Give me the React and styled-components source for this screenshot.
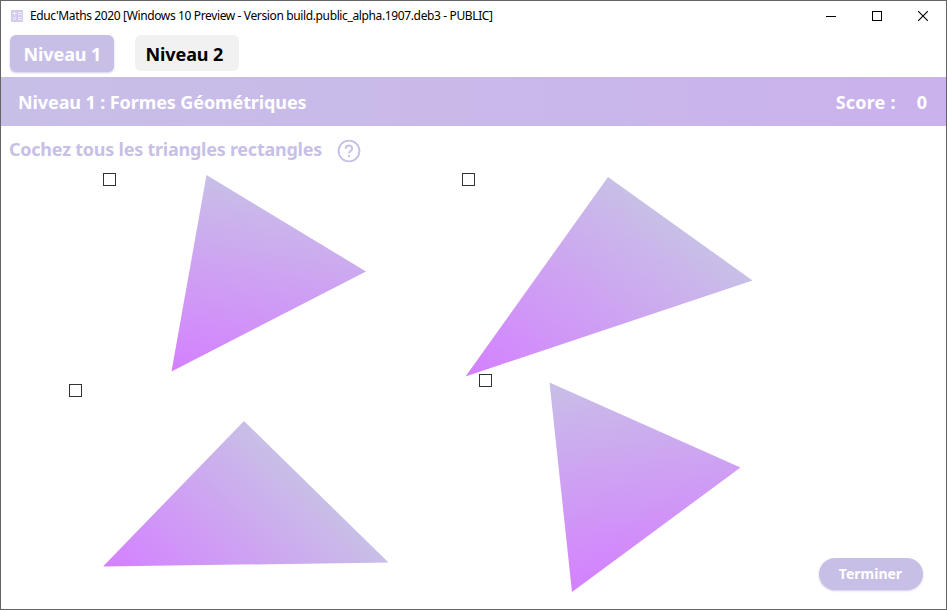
import React from "react";
import styled, { createGlobalStyle } from "styled-components";

const Global = createGlobalStyle`
  * { box-sizing: border-box; }
  body { margin: 0; background: #fff; }
`;
const lilac = "#c8bfe7";

const Window = styled.div`
  width: 947px; height: 610px; display: flex; flex-direction: column;
  border: 1px solid #646464; background: #fff; overflow: hidden;
  font-family: "Noto Sans", "Open Sans", sans-serif;
`;
const TitleBar = styled.header`
  flex: none; height: 30px; display: flex; align-items: center; padding-left: 10px;
`;
const Label = styled.span`
  font-size: ${p => p.$size || 18}px;
  font-weight: ${p => p.$weight || 700};
  letter-spacing: ${p => p.$spacing || 0}px;
  color: ${p => p.$color || "#fff"};
  line-height: 24px; white-space: pre;
`;
const TitleText = styled(Label)`margin-left: 7px;`;
const Controls = styled.div`margin-left: auto; display: flex;`;
const Control = styled.button`
  width: 46px; height: 30px; padding: 0; border: 0; background: none;
  display: grid; place-items: center;
`;
const Tabs = styled.nav`
  flex: none; height: 46px; display: flex; gap: 21px; padding: 4px 0 0 9.4px;
`;
const Tab = styled.button`
  width: 104px; height: ${p => (p.$active ? 37 : 36)}px;
  padding: ${p => (p.$active ? "0" : "1px 6px 0 0")};
  border: 0; border-radius: 6px; font-family: inherit;
  background: ${p => (p.$active ? lilac : "#f1f1f1")};
  box-shadow: ${p => (p.$active ? "0 1px 2px rgba(200,191,231,.8)" : "none")};
`;
const Banner = styled.section`
  flex: none; height: 49px; display: flex; align-items: center;
  padding: 0 19px 0 17px;
  background: linear-gradient(90deg, #c8bfe7, #cab2ec);
`;
const Score = styled.div`margin-left: auto; display: flex; gap: 21px;`;
const Prompt = styled.div`
  flex: none; height: 48px; display: flex; align-items: center; gap: 15px;
  padding: 0 0 2px 8px;
`;
const Board = styled.main`position: relative; flex: 1;`;
const Shapes = styled.svg`position: absolute; left: -1px; top: -174px;`;
const Check = styled.input`
  position: absolute; left: ${p => p.$x - 1}px; top: ${p => p.$y - 174}px;
  width: 13px; height: 13px; margin: 0; appearance: none;
  border: 1px solid #333; background: #fff;
`;
const Finish = styled.button`
  position: absolute; left: 817.5px; top: 384px; width: 104px; height: 31.5px;
  padding: 1px 0 0; border: 0; border-radius: 16px; background: ${lilac};
  box-shadow: 0 1px 2px rgba(200,191,231,.8); font-family: inherit;
`;

/* Each fill runs along the side from the first point (light) to the last (vivid). */
const triangles = [
  [[206.5, 175], [366, 271.5], [171.5, 371.5]],
  [[608, 177], [752.5, 280.5], [465.5, 376.5]],
  [[244, 421], [388.5, 562.5], [103, 566.5]],
  [[549.5, 382.5], [740.5, 467.5], [572, 592]],
];
const checks = [[103, 173], [462, 173], [69, 384], [479, 374]];

const AppIcon = () => (
  <svg width="12" height="12">
    <rect width="12" height="12" rx="1" fill="#d3cbec" />
    <path d="M1.5 3.5h4M3.5 1.5v4M7 2.5h4M7 4.5h4M2 7l3 3M5 7l-3 3M7 7.5h4M7 9.5h4" stroke="#f5f2fc" strokeWidth=".9" />
  </svg>
);
const HelpSvg = styled.svg`position: relative; top: 2px; flex: none;`;
const HelpIcon = () => (
  <HelpSvg width="24" height="24" fill="none" stroke={lilac} strokeWidth="1.9">
    <circle cx="12" cy="12" r="10.4" />
    <path d="M8.8 9.8c0-4.3 6.4-4.3 6.4-.3 0 2.5-3.2 2.3-3.2 5M12 16v2" />
  </HelpSvg>
);

export default function App() {
  return (
    <Window>
      <Global />
      <TitleBar>
        <AppIcon />
        <TitleText $size={12} $weight={400} $color="#000" $spacing={-0.37}>
          Educ'Maths 2020 [Windows 10 Preview - Version build.public_alpha.1907.deb3 - PUBLIC]
        </TitleText>
        <Controls>
          <Control aria-label="Minimize"><svg width="10" height="10"><path d="M0 5.5h10" stroke="#000" /></svg></Control>
          <Control aria-label="Maximize"><svg width="10" height="10"><rect x=".5" y=".5" width="9" height="9" fill="none" stroke="#000" /></svg></Control>
          <Control aria-label="Close"><svg width="10" height="10"><path d="M0 0l10 10M10 0L0 10" stroke="#000" strokeWidth="1.1" /></svg></Control>
        </Controls>
      </TitleBar>
      <Tabs>
        <Tab $active><Label $spacing={-0.1}>Niveau 1</Label></Tab>
        <Tab><Label $color="#000" $spacing={-0.1}>Niveau 2</Label></Tab>
      </Tabs>
      <Banner>
        <Label $spacing={-0.1}>Niveau 1 : Formes Géométriques</Label>
        <Score><Label $spacing={0.2}>Score :</Label><Label>0</Label></Score>
      </Banner>
      <Prompt><Label $color={lilac} $spacing={-0.24}>Cochez tous les triangles rectangles</Label><HelpIcon /></Prompt>
      <Board>
        <Shapes width="947" height="610">
          <defs>
            {triangles.map(([a, , c], i) => (
              <linearGradient key={i} id={`fill${i}`} gradientUnits="userSpaceOnUse" x1={c[0]} y1={c[1]} x2={a[0]} y2={a[1]}>
                <stop stopColor="#d480ff" /><stop offset="1" stopColor="#c8bfe7" />
              </linearGradient>
            ))}
          </defs>
          {triangles.map((t, i) => <polygon key={i} points={t.join(" ")} fill={`url(#fill${i})`} />)}
        </Shapes>
        {checks.map(([x, y]) => <Check key={`${x}-${y}`} type="checkbox" $x={x} $y={y} />)}
        <Finish><Label $size={14}>Terminer</Label></Finish>
      </Board>
    </Window>
  );
}
